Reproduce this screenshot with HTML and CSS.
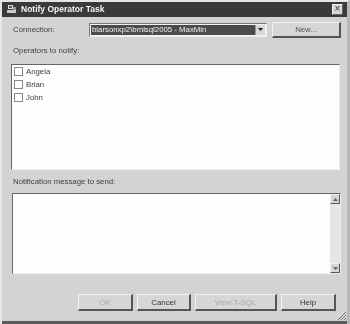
FILE: index.html
```
<!DOCTYPE html>
<html>
  <head>
    <title>Notify Operator Task</title>
    <link rel="stylesheet" href="styles.css">
  </head>
  <body>
    <div class="window">
      <div class="titlebar">
        <svg class="title-icon" width="10" height="10" viewBox="0 0 10 10">
          <rect x="1" y="1" width="5" height="4" fill="#ddd"/>
          <rect x="2" y="2" width="3" height="2" fill="#555"/>
          <rect x="0" y="6" width="9" height="3" fill="#ccc"/>
          <rect x="6" y="3" width="3" height="3" fill="#999"/>
        </svg>
        <span class="title-text">Notify Operator Task</span>
        <span class="close-btn">&#215;</span>
      </div>

      <div class="conn-row">
        <span class="conn-label">Connection:</span>
        <div class="combo">
          <span class="combo-value">blarsonxp2\bmlsql2005 - MaxMin</span>
          <span class="combo-drop">
            <svg width="5" height="3" viewBox="0 0 5 3"><path d="M0 0h5L2.5 3z" fill="#222"/></svg>
          </span>
        </div>
        <button type="button" class="btn btn-new">New...</button>
      </div>

      <div class="section-label">Operators to notify:</div>
      <div class="listbox">
        <label class="item"><span class="check"></span>Angela</label>
        <label class="item"><span class="check"></span>Brian</label>
        <label class="item"><span class="check"></span>John</label>
      </div>

      <div class="section-label msg-label">Notification message to send:</div>
      <div class="memo">
        <div class="memo-text"></div>
        <div class="scrollbar">
          <span class="sb-btn"><svg width="5" height="3" viewBox="0 0 5 3"><path d="M0 3h5L2.5 0z" fill="#666"/></svg></span>
          <span class="sb-track"></span>
          <span class="sb-btn"><svg width="5" height="3" viewBox="0 0 5 3"><path d="M0 0h5L2.5 3z" fill="#666"/></svg></span>
        </div>
      </div>

      <div class="button-row">
        <button type="button" class="btn btn-ok" disabled>OK</button>
        <button type="button" class="btn btn-cancel">Cancel</button>
        <button type="button" class="btn btn-sql" disabled>View T-SQL</button>
        <button type="button" class="btn btn-help">Help</button>
      </div>
      <div class="statusline">
        <svg class="grip" width="10" height="10" viewBox="0 0 10 10">
          <path d="M9 1L1 9M9 4L4 9M9 7L7 9" stroke="#777" stroke-width="1"/>
        </svg>
      </div>
    </div>
  </body>
</html>
```

FILE: styles.css
```
body {
  margin: 0;
  padding: 0;
  background-color: #c8c8c8;
  font-family: "Liberation Sans", Arial, sans-serif;
  font-size: 7.8px;
  color: #404040;
}

/* the whole dialog is a grey photo, so keep text antialiasing grey too */
.window {
  width: 350px;
  height: 324px;
  box-sizing: border-box;
  background-color: #d3d3d3;
  border-top: 2px solid #e6e6e6;
  border-left: 2px solid #e6e6e6;
  border-right: 3px solid #b8b8b8;
  display: flex;
  flex-direction: column;
  filter: grayscale(1);
}

.titlebar {
  height: 15px;
  background-color: #3a3a3a;
  color: #f4f4f4;
  display: flex;
  align-items: center;
  padding: 0 4px 0 5px;
}

.title-icon {
  margin-right: 4px;
}

.title-text {
  font-weight: bold;
  font-size: 8.5px;
  flex: 1;
}

.close-btn {
  width: 9px;
  height: 9px;
  background-color: #d6d6d6;
  color: #333;
  border: 1px solid #f0f0f0;
  border-right-color: #666;
  border-bottom-color: #666;
  font-size: 10px;
  line-height: 8px;
  text-align: center;
}

.conn-row {
  display: flex;
  align-items: center;
  margin-top: 5px;
  height: 16px;
  padding-left: 11px;
}

.conn-label {
  width: 76px;
}

.combo {
  width: 178px;
  height: 14px;
  box-sizing: border-box;
  background-color: #f2f2f2;
  border: 1px solid #777;
  border-right-color: #eee;
  border-bottom-color: #eee;
  display: flex;
  align-items: stretch;
  padding: 1px;
}

.combo-value {
  flex: 1;
  background-color: #4b4b4b;
  color: #f2f2f2;
  line-height: 10px;
  padding-left: 1px;
  white-space: nowrap;
  overflow: hidden;
}

.combo-drop {
  width: 9px;
  background-color: #d8d8d8;
  border-left: 1px solid #999;
  display: flex;
  align-items: center;
  justify-content: center;
}

.btn {
  font-family: "Liberation Sans", Arial, sans-serif;
  font-size: 7.8px;
  color: #333;
  height: 17px;
  padding: 0;
  background-color: #d6d6d6;
  border: 1px solid #f2f2f2;
  border-right: 2px solid #555;
  border-bottom: 2px solid #555;
}

.btn:disabled {
  color: #a8a8a8;
}

.btn-new {
  width: 69px;
  height: 16px;
  margin-left: 5px;
  color: #555;
}

.section-label {
  margin-top: 6px;
  padding-left: 11px;
  line-height: 13px;
}

.listbox {
  margin: 7px 7px 0 9px;
  height: 106px;
  background-color: #fdfdfd;
  border: 1px solid #666;
  border-right-color: #eee;
  border-bottom-color: #eee;
}

.item {
  display: flex;
  align-items: center;
  height: 13px;
  padding-left: 2px;
}

.check {
  width: 7px;
  height: 7px;
  border: 1px solid #888;
  background-color: #fff;
  margin-right: 3px;
}

.msg-label {
  margin-top: 5px;
}

.memo {
  margin: 5px 6px 0 10px;
  height: 82px;
  box-sizing: border-box;
  background-color: #fdfdfd;
  border: 1px solid #666;
  border-right-color: #eee;
  border-bottom-color: #eee;
  display: flex;
}

.memo-text {
  flex: 1;
}

.scrollbar {
  width: 10px;
  display: flex;
  flex-direction: column;
  background-color: #e6e6e6;
}

.sb-btn {
  height: 10px;
  box-sizing: border-box;
  background-color: #d6d6d6;
  border: 1px solid #f2f2f2;
  border-right-color: #555;
  border-bottom-color: #555;
  display: flex;
  align-items: center;
  justify-content: center;
}

.sb-track {
  flex: 1;
}

.button-row {
  display: flex;
  gap: 4px;
  margin-top: 20px;
  padding-left: 76px;
}

.btn-ok {
  width: 55px;
}

.btn-cancel {
  width: 54px;
}

.btn-sql {
  width: 82px;
}

.btn-help {
  width: 55px;
}

.statusline {
  flex: 1;
  display: flex;
  justify-content: flex-end;
  align-items: flex-end;
  border-bottom: 3px solid #5a5a5a;
}
```
